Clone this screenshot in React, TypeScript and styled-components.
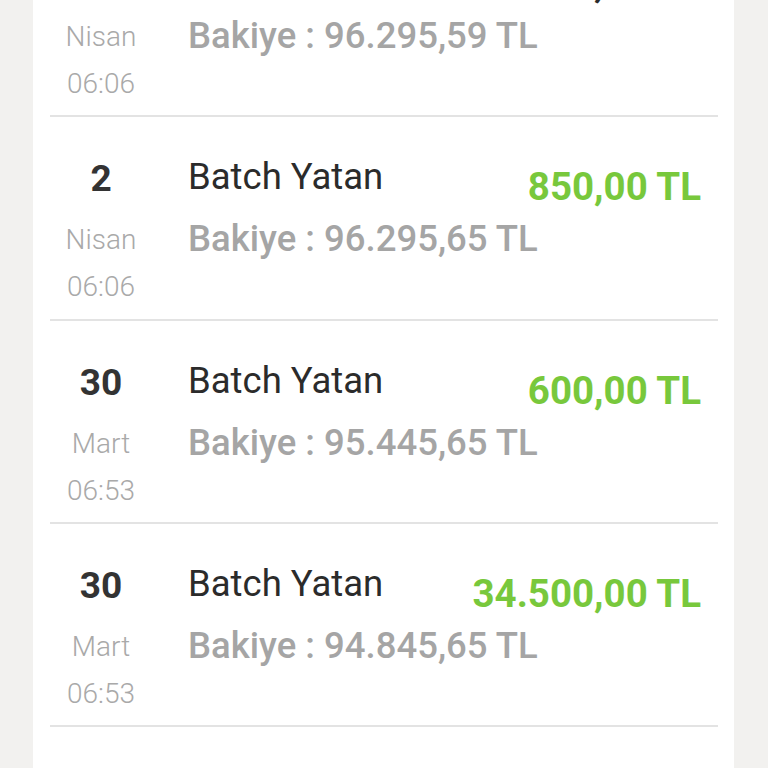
import React from "react";
import styled, { createGlobalStyle } from "styled-components";

const Global = createGlobalStyle`
  html, body {
    margin: 0;
    padding: 0;
    height: 768px;
    overflow: hidden;
    background: #f2f1ef;
    font-family: Roboto, "Liberation Sans", sans-serif;
  }
`;

const Page = styled.div`
  height: 768px;
  overflow: hidden;
  padding: 0 34px 0 33px;
  box-sizing: border-box;
`;

const Card = styled.div`
  background: #ffffff;
  height: 100%;
  padding: 0 16px 0 17px;
  overflow: hidden;
`;

const List = styled.div`
  margin-top: -86px;
  display: flex;
  flex-direction: column;
`;

const Row = styled.div`
  display: flex;
  align-items: flex-start;
  height: 203.3px;
  box-sizing: border-box;
  border-bottom: 2px solid #e3e3e3;
  padding: 38px 17px 0 0;
`;

const DateCol = styled.div`
  width: 102px;
  display: flex;
  flex-direction: column;
  align-items: center;
  flex-shrink: 0;
`;

const Day = styled.div`
  font-size: 37px;
  font-weight: 700;
  line-height: 48px;
  color: #333333;
`;

const Sub = styled.div<{ $gap?: number }>`
  font-size: 28px;
  font-weight: 300;
  line-height: 47px;
  color: #a9a9a9;
  margin-top: ${(p) => p.$gap ?? 0}px;
`;

const Info = styled.div`
  flex: 1;
  min-width: 0;
  margin-left: 36px;
  display: flex;
  flex-direction: column;
`;

const TopLine = styled.div`
  display: flex;
  justify-content: space-between;
  align-items: flex-start;
`;

const Title = styled.div`
  font-size: 36.5px;
  font-weight: 400;
  line-height: 44px;
  color: #2b2b2b;
  white-space: nowrap;
`;

const Balance = styled.div`
  font-size: 36.5px;
  font-weight: 500;
  line-height: 44px;
  margin-top: 18px;
  color: #a5a5a5;
  white-space: nowrap;
`;

const Amount = styled.div<{ $neg?: boolean }>`
  font-size: 38.5px;
  font-weight: 700;
  line-height: 44px;
  margin-top: 10px;
  margin-bottom: -10px;
  color: ${(p) => (p.$neg ? "#2b2b2b" : "#78c83c")};
  white-space: nowrap;
`;

type Tx = {
  day: string;
  month: string;
  time: string;
  title: string;
  balance: string;
  amount: string;
  neg?: boolean;
};

const data: Tx[] = [
  { day: "2", month: "Nisan", time: "06:06", title: "Komisyon", balance: "96.295,59 TL", amount: "-0,06 TL", neg: true },
  { day: "2", month: "Nisan", time: "06:06", title: "Batch Yatan", balance: "96.295,65 TL", amount: "850,00 TL" },
  { day: "30", month: "Mart", time: "06:53", title: "Batch Yatan", balance: "95.445,65 TL", amount: "600,00 TL" },
  { day: "30", month: "Mart", time: "06:53", title: "Batch Yatan", balance: "94.845,65 TL", amount: "34.500,00 TL" },
  { day: "29", month: "Mart", time: "06:40", title: "Batch Yatan", balance: "60.345,65 TL", amount: "1.200,00 TL" },
];

export default function App() {
  return (
    <>
      <Global />
      <Page>
        <Card>
          <List>
            {data.map((t, i) => (
              <Row key={i}>
                <DateCol>
                  <Day>{t.day}</Day>
                  <Sub $gap={13}>{t.month}</Sub>
                  <Sub>{t.time}</Sub>
                </DateCol>
                <Info>
                  <TopLine>
                    <Title>{t.title}</Title>
                    <Amount $neg={t.neg}>{t.amount}</Amount>
                  </TopLine>
                  <Balance>Bakiye : {t.balance}</Balance>
                </Info>
              </Row>
            ))}
          </List>
        </Card>
      </Page>
    </>
  );
}
